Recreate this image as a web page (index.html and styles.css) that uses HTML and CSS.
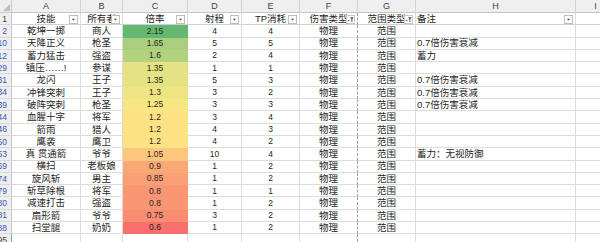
FILE: index.html
```html
<!DOCTYPE html>
<html lang="zh">
<head>
<meta charset="utf-8">
<link rel="stylesheet" href="styles.css">
</head>
<body>
<div class="sheet">
  <div class="row colhead">
    <div class="corner"><svg width="7" height="7" viewBox="0 0 7 7"><polygon points="7,0 7,7 0,7" fill="#bdbdbd"/></svg></div>
    <div class="ch">A</div><div class="ch">B</div><div class="ch">C</div><div class="ch">D</div><div class="ch">E</div><div class="ch">F</div><div class="ch">G</div><div class="ch">H</div><div class="ch">I</div>
  </div>

  <div class="row head">
    <div class="rh dark">1</div>
    <div class="c">技能<span class="btn"><svg viewBox="0 0 9 9"><polygon points="2.5,3.5 6.5,3.5 4.5,6" fill="#555"/></svg></span></div>
    <div class="c">所有者<span class="btn"><svg viewBox="0 0 9 9"><polygon points="2.5,3.5 6.5,3.5 4.5,6" fill="#555"/></svg></span></div>
    <div class="c">倍率<span class="btn"><svg viewBox="0 0 9 9"><polygon points="2.5,3.5 6.5,3.5 4.5,6" fill="#555"/></svg></span></div>
    <div class="c">射程<span class="btn"><svg viewBox="0 0 9 9"><polygon points="2.5,3.5 6.5,3.5 4.5,6" fill="#555"/></svg></span></div>
    <div class="c">TP消耗<span class="btn"><svg viewBox="0 0 9 9"><polygon points="2.5,3.5 6.5,3.5 4.5,6" fill="#555"/></svg></span></div>
    <div class="c brk">伤害类型<span class="btn on"><svg viewBox="0 0 9 9"><polygon points="1,5 3.6,5 2.3,6.8" fill="#444"/><polygon points="4,1.6 8.6,1.6 6.9,4 6.9,7.6 5.7,7.6 5.7,4" fill="#444"/></svg></span></div>
    <div class="c">范围类型<span class="btn on"><svg viewBox="0 0 9 9"><polygon points="1,5 3.6,5 2.3,6.8" fill="#444"/><polygon points="4,1.6 8.6,1.6 6.9,4 6.9,7.6 5.7,7.6 5.7,4" fill="#444"/></svg></span></div>
    <div class="c left">备注<span class="btn"><svg viewBox="0 0 9 9"><polygon points="2.5,3.5 6.5,3.5 4.5,6" fill="#555"/></svg></span></div>
    <div class="c"></div>
  </div>

  <div class="row"><div class="rh">2</div><div class="c">乾坤一掷</div><div class="c">商人</div><div class="c num scale" style="background:#64b872">2.15</div><div class="c num">4</div><div class="c num">4</div><div class="c brk">物理</div><div class="c">范围</div><div class="c left"></div><div class="c"></div></div>
  <div class="row"><div class="rh">10</div><div class="c">天降正义</div><div class="c">枪圣</div><div class="c num scale" style="background:#a8ce7e">1.65</div><div class="c num">5</div><div class="c num">5</div><div class="c brk">物理</div><div class="c">范围</div><div class="c left">0.7倍伤害衰减</div><div class="c"></div></div>
  <div class="row"><div class="rh">12</div><div class="c">蓄力猛击</div><div class="c">强盗</div><div class="c num scale" style="background:#b2d27f">1.6</div><div class="c num">2</div><div class="c num">4</div><div class="c brk">物理</div><div class="c">范围</div><div class="c left">蓄力</div><div class="c"></div></div>
  <div class="row"><div class="rh">29</div><div class="c">镇压……!</div><div class="c">参谋</div><div class="c num scale" style="background:#e4e283">1.35</div><div class="c num">1</div><div class="c num">1</div><div class="c brk">物理</div><div class="c">范围</div><div class="c left"></div><div class="c"></div></div>
  <div class="row"><div class="rh">31</div><div class="c">龙闪</div><div class="c">王子</div><div class="c num scale" style="background:#e4e283">1.35</div><div class="c num">5</div><div class="c num">3</div><div class="c brk">物理</div><div class="c">范围</div><div class="c left">0.7倍伤害衰减</div><div class="c"></div></div>
  <div class="row"><div class="rh">34</div><div class="c">冲锋突刺</div><div class="c">王子</div><div class="c num scale" style="background:#eee483">1.3</div><div class="c num">3</div><div class="c num">2</div><div class="c brk">物理</div><div class="c">范围</div><div class="c left">0.7倍伤害衰减</div><div class="c"></div></div>
  <div class="row"><div class="rh">39</div><div class="c">破阵突刺</div><div class="c">枪圣</div><div class="c num scale" style="background:#f8e683">1.25</div><div class="c num">3</div><div class="c num">3</div><div class="c brk">物理</div><div class="c">范围</div><div class="c left">0.7倍伤害衰减</div><div class="c"></div></div>
  <div class="row"><div class="rh">44</div><div class="c">血腥十字</div><div class="c">将军</div><div class="c num scale" style="background:#fde283">1.2</div><div class="c num">3</div><div class="c num">4</div><div class="c brk">物理</div><div class="c">范围</div><div class="c left"></div><div class="c"></div></div>
  <div class="row"><div class="rh">46</div><div class="c">箭雨</div><div class="c">猎人</div><div class="c num scale" style="background:#fde283">1.2</div><div class="c num">4</div><div class="c num">3</div><div class="c brk">物理</div><div class="c">范围</div><div class="c left"></div><div class="c"></div></div>
  <div class="row"><div class="rh">50</div><div class="c">鹰袭</div><div class="c">鹰卫</div><div class="c num scale" style="background:#fde283">1.2</div><div class="c num">4</div><div class="c num">2</div><div class="c brk">物理</div><div class="c">范围</div><div class="c left"></div><div class="c"></div></div>
  <div class="row"><div class="rh">53</div><div class="c">真 贯通箭</div><div class="c">爷爷</div><div class="c num scale" style="background:#fdc67d">1.05</div><div class="c num">10</div><div class="c num">4</div><div class="c brk">物理</div><div class="c">范围</div><div class="c left">蓄力：无视防御</div><div class="c"></div></div>
  <div class="row"><div class="rh">69</div><div class="c">横扫</div><div class="c">老板娘</div><div class="c num scale" style="background:#fba877">0.9</div><div class="c num">1</div><div class="c num">2</div><div class="c brk">物理</div><div class="c">范围</div><div class="c left"></div><div class="c"></div></div>
  <div class="row"><div class="rh">74</div><div class="c">旋风斩</div><div class="c">男主</div><div class="c num scale" style="background:#fb9f75">0.85</div><div class="c num">1</div><div class="c num">2</div><div class="c brk">物理</div><div class="c">范围</div><div class="c left"></div><div class="c"></div></div>
  <div class="row"><div class="rh">79</div><div class="c">斩草除根</div><div class="c">将军</div><div class="c num scale" style="background:#fa9673">0.8</div><div class="c num">1</div><div class="c num">1</div><div class="c brk">物理</div><div class="c">范围</div><div class="c left"></div><div class="c"></div></div>
  <div class="row"><div class="rh">80</div><div class="c">减速打击</div><div class="c">强盗</div><div class="c num scale" style="background:#fa9673">0.8</div><div class="c num">1</div><div class="c num">2</div><div class="c brk">物理</div><div class="c">范围</div><div class="c left"></div><div class="c"></div></div>
  <div class="row"><div class="rh">81</div><div class="c">扇形箭</div><div class="c">爷爷</div><div class="c num scale" style="background:#f98d71">0.75</div><div class="c num">3</div><div class="c num">2</div><div class="c brk">物理</div><div class="c">范围</div><div class="c left"></div><div class="c"></div></div>
  <div class="row"><div class="rh">88</div><div class="c">扫堂腿</div><div class="c">奶奶</div><div class="c num scale" style="background:#f86f6c">0.6</div><div class="c num">1</div><div class="c num">2</div><div class="c brk">物理</div><div class="c">范围</div><div class="c left"></div><div class="c"></div></div>
  <div class="row"><div class="rh dark sel">95</div><div class="c"></div><div class="c"></div><div class="c"></div><div class="c"></div><div class="c"></div><div class="c brk"></div><div class="c"></div><div class="c left"></div><div class="c"></div></div>
</div>
</body>
</html>
```
FILE: styles.css
```css
html, body {
  margin: 0;
  padding: 0;
  background: #ffffff;
  overflow: hidden;
}
body {
  font-family: "Liberation Sans", "Noto Sans CJK SC", sans-serif;
  color: #262626;
  width: 600px;
  height: 242px;
}
.sheet {
  display: flex;
  flex-direction: column;
}
.row {
  display: grid;
  grid-template-columns: 12px 69px 42px 65px 54px 58px 58px 58px 160px 40px;
  height: 12.3px;
}
.row.colhead {
  height: 13px;
}
.corner {
  background: #efefef;
  border-right: 1px solid #c9c9c9;
  border-bottom: 1px solid #c9c9c9;
  display: flex;
  align-items: flex-end;
  justify-content: flex-end;
  padding: 0 1px 1px 0;
}
.corner svg {
  display: block;
}
.ch {
  background: #efefef;
  color: #444444;
  font-size: 9px;
  border-right: 1px solid #d2d2d2;
  border-bottom: 1px solid #c6c6c6;
  display: flex;
  align-items: center;
  justify-content: center;
}
.rh {
  background: #efefef;
  color: #3d56b8;
  font-size: 8.5px;
  border-right: 1px solid #c6c6c6;
  border-bottom: 1px solid #d8d8d8;
  display: flex;
  align-items: center;
  justify-content: flex-end;
  padding-right: 4px;
  overflow: hidden;
  white-space: nowrap;
}
.rh.dark {
  color: #444444;
}
.rh.sel {
  border-right: 1px solid #7fb08a;
}
.c {
  position: relative;
  border-right: 1px solid #dcdcdc;
  border-bottom: 1px solid #dcdcdc;
  display: flex;
  align-items: center;
  justify-content: center;
  overflow: hidden;
  white-space: nowrap;
  font-size: 9.5px;
  line-height: 1;
}
.c.left {
  justify-content: flex-start;
  padding-left: 1px;
}
.c.num {
  font-size: 8.5px;
}
.c.scale {
  border-right-color: transparent;
  border-bottom-color: transparent;
}
.c.brk {
  border-right: 1px dashed #9c9c9c;
}
.head .c {
  border-bottom-color: #d0d0d0;
}
.btn {
  position: absolute;
  right: 2px;
  top: 1.5px;
  width: 9px;
  height: 9px;
  box-sizing: border-box;
  border: 1px solid #bdbdbd;
  background: #ffffff;
}
.btn svg {
  display: block;
  width: 7px;
  height: 7px;
}
.btn.on {
  border-color: #c8c8c8;
}
```
